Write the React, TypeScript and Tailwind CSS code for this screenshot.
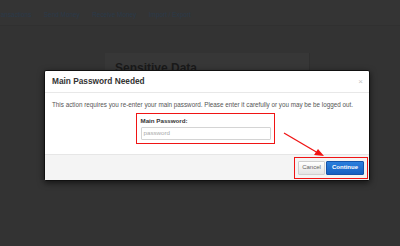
import React from 'react';

const navItems = ['Transactions', 'Send Money', 'Receive Money', 'Import / Export'];

const App: React.FC = () => {
  return (
    <div className="relative w-[400px] h-[246px] overflow-hidden bg-[#333333] font-['Liberation_Sans',Arial,sans-serif]">
      {/* page behind the overlay */}
      <nav className="h-[26px] pt-[4px] flex items-center gap-[12.5px] -ml-[5px] bg-[#343434] border-b border-[#303030] text-[6.4px] text-[#2b3a4a]">
        {navItems.map((item) => (
          <span key={item} className="whitespace-nowrap">{item}</span>
        ))}
      </nav>
      <div className="flex pt-[27px] pl-[105px]">
        <div className="w-[205px] h-[110px] bg-[#373737] border-r border-[#2f2f2f] px-[10px] pt-[8px]">
          <h2 className="text-[12px] leading-[14px] font-bold text-[#1a1a1a]">Sensitive Data</h2>
        </div>
      </div>

      {/* modal */}
      <div className="absolute left-[44px] top-[70px] w-[326px] h-[111px] bg-white border border-[#111] rounded-[2px] shadow-[0_2px_6px_rgba(0,0,0,0.6)] flex flex-col">
        <div className="h-[22px] flex items-center justify-between px-[7px] border-b border-[#e8e8e8]">
          <span className="text-[8.3px] font-bold text-[#333]">Main Password Needed</span>
          <span className="text-[8px] leading-none text-[#c4c4c4] -mr-[1px]">×</span>
        </div>
        <div className="h-[61px] pt-[8px] px-[7px]">
          <p className="text-[6.3px] leading-[8px] text-[#555] whitespace-nowrap">
            This action requires you re-enter your main password. Please enter it carefully or you may be be logged out.
          </p>
          <div className="mt-[4px] ml-[84px] w-[139px] h-[31px] border-[1.5px] border-[#f01414] px-[3.5px] pt-[2.5px]">
            <div className="text-[6.2px] leading-[8px] font-bold text-[#333]">Main Password:</div>
            <div className="mt-[2px] w-[130px] h-[13px] border border-[#d4d4d4] rounded-[1px] flex items-center px-[2px] text-[6.2px] text-[#aaa]">
              password
            </div>
          </div>
        </div>
        <div className="flex-1 bg-[#f4f4f4] border-t border-[#e6e6e6] flex items-center justify-end pr-[1px]">
          <div className="w-[74px] h-[22px] border-[1.5px] border-[#f01414] flex items-center justify-center gap-[1px]">
            <button className="w-[27px] h-[14px] rounded-[1px] border border-[#cfcfcf] bg-gradient-to-b from-white to-[#e4e4e4] text-[6px] text-[#666]">
              Cancel
            </button>
            <button className="w-[38px] h-[14px] rounded-[1px] border border-[#1553a8] bg-gradient-to-b from-[#2b7fdd] to-[#1560c2] text-[6px] font-bold text-white">
              Continue
            </button>
          </div>
        </div>
      </div>

      {/* annotation arrow */}
      <svg className="absolute left-0 top-0" width="400" height="246" viewBox="0 0 400 246">
        <line x1="284" y1="133" x2="318" y2="153" stroke="#f01414" strokeWidth="1.3" />
        <polygon points="324,156 314,155 318,149" fill="#f01414" />
      </svg>
    </div>
  );
};

export default App;
